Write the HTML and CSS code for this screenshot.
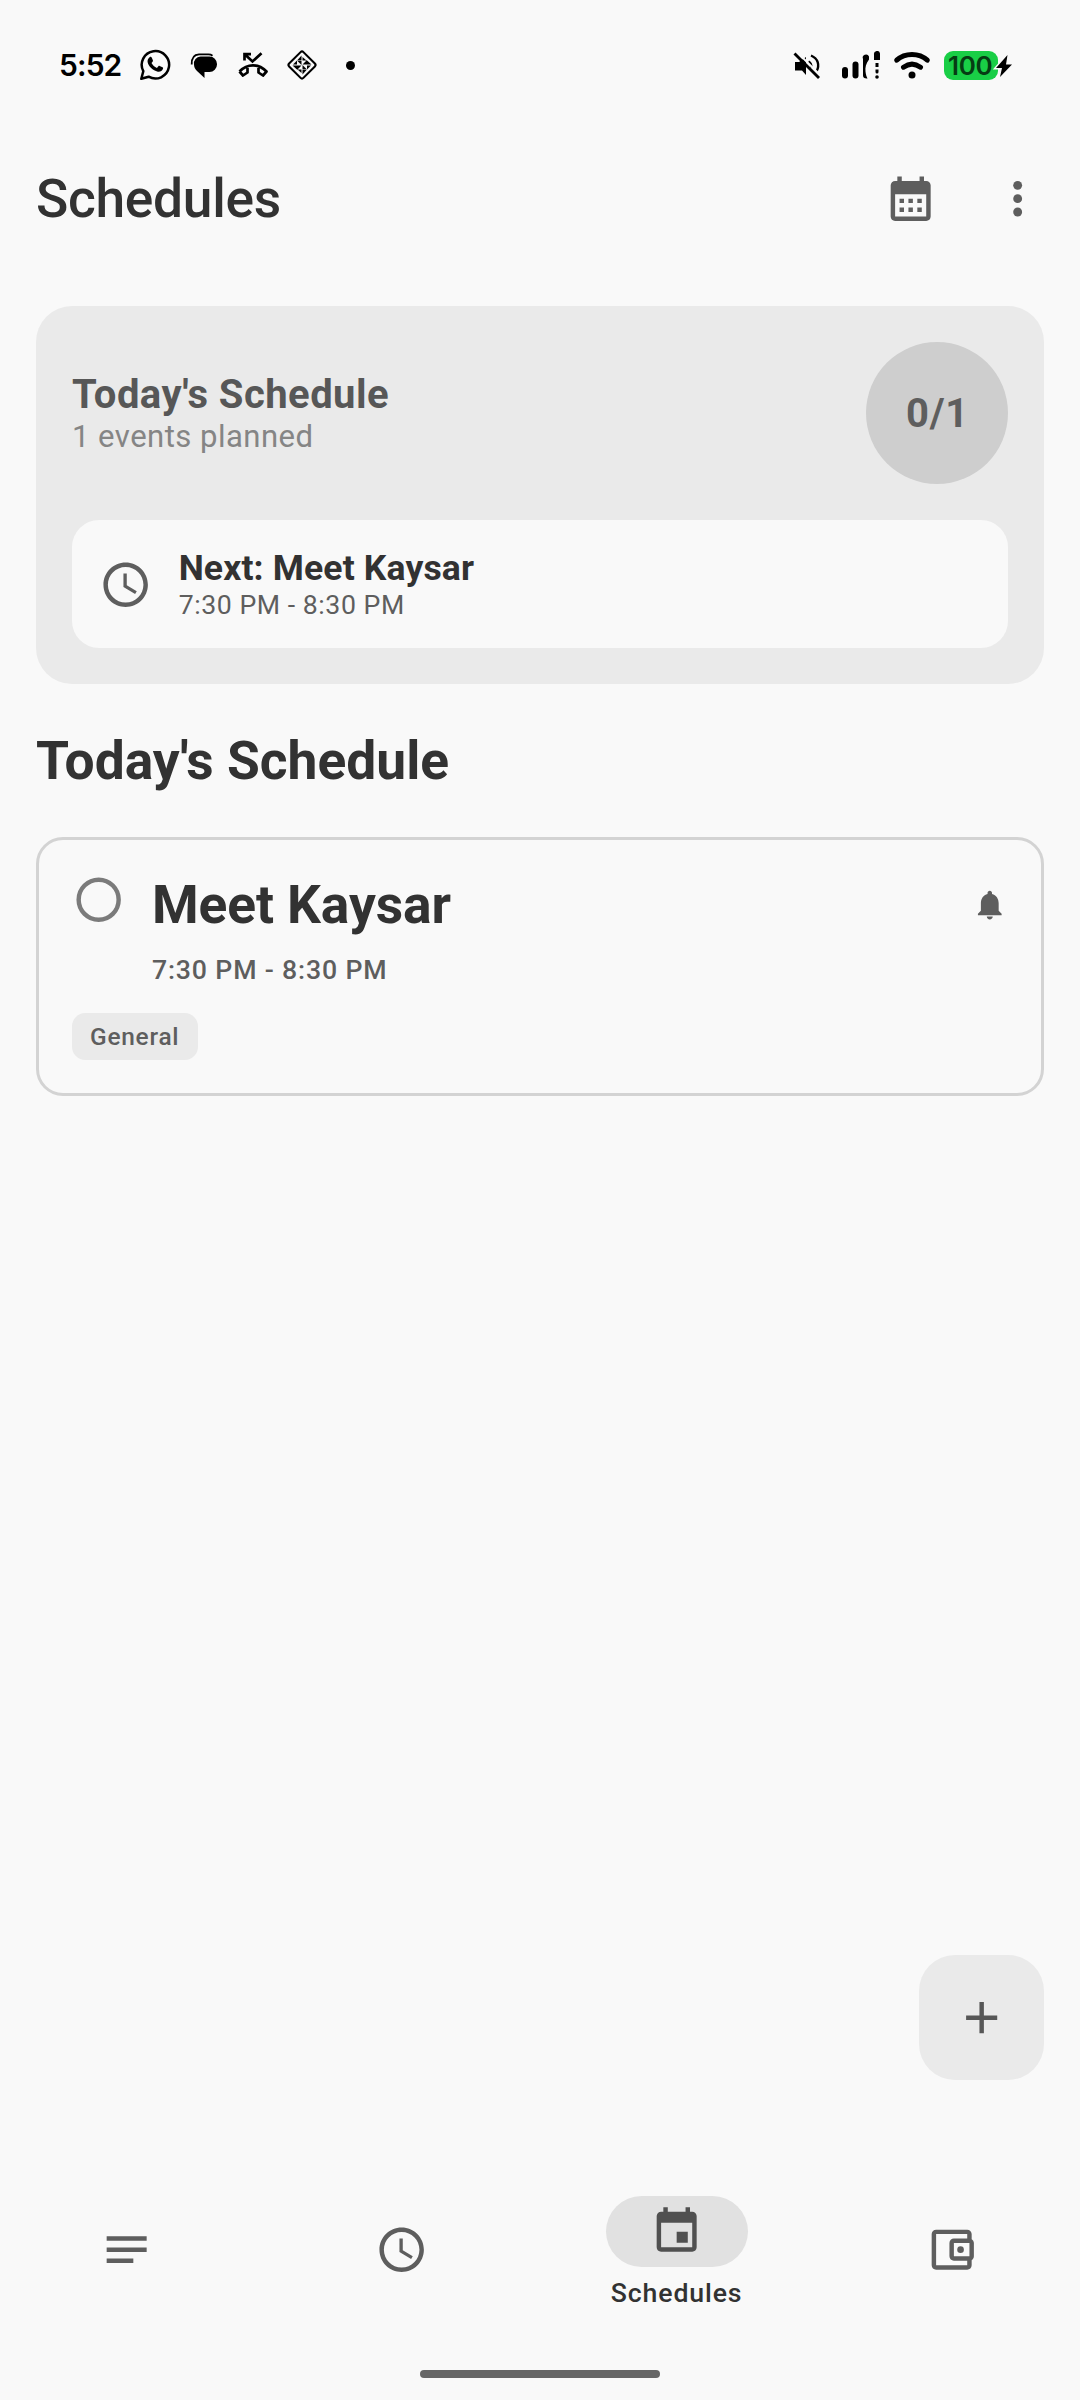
FILE: index.html
```
<!DOCTYPE html>
<html lang="en">
<head>
<meta charset="utf-8">
<title>Schedules</title>
<link rel="stylesheet" href="styles.css">
</head>
<body>
<div class="status">
  <div class="status-left">
    <span class="time">5:52</span>
    <svg class="s-chat" width="32" height="32" viewBox="0 0 32 32"><path d="M2.300 29.800 4.300 22.200A13.700 13.700 0 1 1 9.600 27.700Z" fill="none" stroke="#000" stroke-width="2.500" stroke-linejoin="round"/><path d="M10.600 8.200c.6-.5 1.700-.5 2.100.3l1.200 2.800c.2.500 0 1-.3 1.400l-1.100 1.400c1.200 2.300 3 3.900 5.400 4.900l1.500-1.800c.3-.4.8-.5 1.200-.3l2.900 1.400c.6.300.7.8.5 1.500-.7 2.300-3.100 3.300-5.200 2.900-5-1.100-9.300-5.100-10.200-9.600-.3-1.900.6-3.900 2-4.900z"/></svg>
    <svg class="s-msg" width="28" height="28" viewBox="0 0 28 28"><path d="M10.500 4.500h9a7.500 7.500 0 0 1 7.500 7.500v.5a7.500 7.500 0 0 1-7.500 7.500h-5v6l-7.500-7c-2-1.700-3-4-3-6.500a7 7 0 0 1 6.500-8z"/><path d="M1.700 12.500C1.500 6 4.500 2.600 9 2.400h9.500c1.800 0 3 .5 4 1.300" fill="none" stroke="#000" stroke-width="1.800"/></svg>
    <svg class="s-call" width="32" height="28" viewBox="0 0 32 28"><g fill="none" stroke="#000" stroke-width="2.700"><path d="M7.500 9.500V3.200h6.500M8 3.500l7.500 7L24.500 2.200"/><path d="M2.500 20.500c7.800-8.300 19.200-8.300 27 0l-3.500 4-4.500-3v-4.500M2.500 20.500l3.500 4 4.500-3v-4.500" stroke-linejoin="round"/></g></svg>
    <svg class="s-diamond" width="32" height="32" viewBox="0 0 32 32"><rect x="5.900" y="5.900" width="20.200" height="20.200" rx="2" transform="rotate(45 16 16)" fill="none" stroke="#000" stroke-width="2.100"/><path d="M15.500 6.500v5h-4.500zM16.500 11.500v-3.500l4 3.500zM6.500 16.500h5v4.500zM11 11.500v4h-4zM16.500 25.500v-5H21zM15.500 20.500V24l-4-3.500zM25.500 15.500h-5V11zM21 20.500v-4h4zM11.500 12h4v4zM20.500 11.500v4h-4zM20.500 20h-4v-4zM11.500 20.500v-4h4z"/></svg>
    <span class="dot"></span>
  </div>
  <div class="status-right">
    <svg class="s-mute" width="28" height="28" viewBox="0 0 28 28"><path d="M2 10h4l7-5v18l-4-4.500H2z"/><path d="M15.500 9.500c2 1 3 3 2.800 6M18 3.500c7 3 9 9.500 5.500 16" fill="none" stroke="#000" stroke-width="2.400"/><path d="M3.500-.5 28 24" stroke="#f9f9f9" stroke-width="2"/><path d="M1.500 1.500 26 26" stroke="#000" stroke-width="2.800"/></svg>
    <svg class="s-signal" width="40" height="28" viewBox="0 0 40 28"><rect x="1" y="16" width="6" height="11.500" rx="3"/><rect x="11.500" y="10.500" width="6" height="17" rx="3"/><path d="M22 24.500V8a3 3 0 0 1 6-2.500v3c-3 4-4 8-3.500 12 .3 3 1 5 2 7-3 .3-4.500-1-4.500-3z"/><path d="M33 9V3.500a3 3 0 0 1 6-1V9zM34.500 12h3v4h-3zM34.500 18.500h3V21a1.500 1.500 0 0 1-3 0z"/><circle cx="36" cy="26" r="1.800"/></svg>
    <svg class="s-wifi" width="38" height="28" viewBox="0 0 38 28"><g fill="none" stroke="#000" stroke-linecap="round" stroke-width="5"><path d="M3.700 9.200C12 1.500 26 1.500 34.300 9.200"/><path d="M10.500 16.200c5.500-4 11.500-4 17 0"/></g><circle cx="19" cy="24" r="3.500"/></svg>
    <div class="battery"><span>100</span><svg class="bolt" width="22" height="26" viewBox="0 0 22 26"><path d="M14.500 2 3 15h6l-2 9L19 11.500h-6z" stroke="#f9f9f9" stroke-width="3" paint-order="stroke"/></svg></div>
  </div>
</div>

<header class="header">
  <h1>Schedules</h1>
  <div class="actions">
    <svg class="icon" viewBox="0 0 24 24"><path d="M19 4h-1V2h-2v2H8V2H6v2H5c-1.110 0-1.990.9-1.990 2L3 20c0 1.100.89 2 2 2h14c1.100 0 2-.9 2-2V6c0-1.100-.9-2-2-2zm0 16H5V10h14v10zM9 14H7v-2h2v2zm4 0h-2v-2h2v2zm4 0h-2v-2h2v2zm-8 4H7v-2h2v2zm4 0h-2v-2h2v2zm4 0h-2v-2h2v2z"/></svg>
    <svg class="icon" viewBox="0 0 24 24"><circle cx="12" cy="6" r="2"/><circle cx="12" cy="12" r="2"/><circle cx="12" cy="18" r="2"/></svg>
  </div>
</header>

<main class="main">
  <section class="summary">
    <div class="summary-top">
      <div class="summary-text">
        <h2>Today's Schedule</h2>
        <p>1 events planned</p>
      </div>
      <div class="count">0/1</div>
    </div>
    <div class="next">
      <svg class="icon" viewBox="0 0 24 24"><path d="M11.990 2C6.470 2 2 6.480 2 12s4.470 10 9.990 10C17.520 22 22 17.520 22 12S17.520 2 11.990 2zM12 20c-4.420 0-8-3.580-8-8s3.580-8 8-8 8 3.580 8 8-3.580 8-8 8zm.5-13H11v6l5.250 3.150.75-1.230-4.500-2.670z"/></svg>
      <div class="next-text">
        <h3>Next: Meet Kaysar</h3>
        <p>7:30 PM - 8:30 PM</p>
      </div>
    </div>
  </section>

  <h2 class="section-title">Today's Schedule</h2>

  <article class="event">
    <div class="event-row">
      <svg class="icon radio" viewBox="0 0 24 24"><circle cx="12" cy="12" r="9" fill="none" stroke="#7b7b7b" stroke-width="2"/></svg>
      <div class="event-text">
        <h3>Meet Kaysar</h3>
        <p>7:30 PM - 8:30 PM</p>
      </div>
      <svg class="bell" viewBox="0 0 24 24"><path d="M12 22c1.100 0 2-.9 2-2h-4c0 1.100.89 2 2 2zm6-6v-5c0-3.070-1.640-5.640-4.500-6.320V4c0-.83-.67-1.500-1.500-1.500s-1.500.67-1.500 1.500v.68C7.630 5.360 6 7.920 6 11v5l-2 2v1h16v-1l-2-2z"/></svg>
    </div>
    <span class="chip">General</span>
  </article>
  <button class="fab" aria-label="Add"><svg class="icon" viewBox="0 0 24 24"><path d="M19 13h-6v6h-2v-6H5v-2h6V5h2v6h6v2z"/></svg></button>
</main>

<nav class="nav">
  <a class="item"><svg class="icon" viewBox="0 0 24 24"><path d="M3 18h12v-2H3v2zM3 6v2h18V6H3zm0 7h18v-2H3v2z"/></svg></a>
  <a class="item"><svg class="icon" viewBox="0 0 24 24"><path d="M11.990 2C6.470 2 2 6.480 2 12s4.470 10 9.990 10C17.520 22 22 17.520 22 12S17.520 2 11.990 2zM12 20c-4.420 0-8-3.580-8-8s3.580-8 8-8 8 3.580 8 8-3.580 8-8 8zm.5-13H11v6l5.250 3.150.75-1.230-4.500-2.670z"/></svg></a>
  <a class="item active"><span class="pill"><svg class="icon" viewBox="0 0 24 24"><path d="M17 12h-5v5h5v-5zM16 1v2H8V1H6v2H5c-1.110 0-1.990.9-1.990 2L3 19c0 1.100.89 2 2 2h14c1.100 0 2-.9 2-2V5c0-1.100-.9-2-2-2h-1V1h-2zm3 18H5V8h14v11z"/></svg></span><span class="label">Schedules</span></a>
  <a class="item"><svg class="icon" viewBox="0 0 24 24"><path d="M21 7.280V5c0-1.100-.9-2-2-2H5c-1.110 0-2 .9-2 2v14c0 1.100.89 2 2 2h14c1.100 0 2-.9 2-2v-2.280c.59-.35 1-.98 1-1.720V9c0-.74-.41-1.370-1-1.720zM20 9v6h-7V9h7zM5 19V5h14v2h-6c-1.100 0-2 .9-2 2v6c0 1.100.9 2 2 2h6v2H5z"/><circle cx="16" cy="12" r="1.500"/></svg></a>
</nav>
<div class="home-bar"></div>
</body>
</html>
```
FILE: styles.css
```
* { box-sizing: border-box; margin: 0; padding: 0; }
body {
  width: 1080px; height: 2400px;
  display: flex; flex-direction: column;
  background: #f9f9f9; color: #323232;
  font-family: Roboto, sans-serif;
  overflow: hidden;
}
svg { display: block; flex: none; }
.icon { width: 53.330px; height: 53.330px; fill: #5e5e5e; }

.status { height: 130px; display: flex; justify-content: space-between; padding: 0 66px 0 59px; }
.status-left, .status-right { display: flex; align-items: center; height: 130px; }
.time { width: 80px; font: 600 30px/36px Inter, sans-serif; letter-spacing: -0.9px; color: #000; }
.s-msg { margin: 2px 0 0 19px; }
.s-call { margin-left: 19px; }
.s-diamond { margin-left: 17px; }
.dot { width: 9px; height: 9px; border-radius: 50%; background: #000; margin-left: 28px; }
.s-mute { margin-top: 2px; }
.s-signal { margin-left: 20px; }
.s-wifi { margin-left: 12px; }
.battery {
  position: relative; width: 54px; height: 29px; margin: 0 16px 0 13px;
  border-radius: 9px; background: #19ce46;
}
.battery span { display: block; padding-left: 4px; font: 600 26px/29px Inter, sans-serif; letter-spacing: -0.3px; color: #063c13; }
.bolt { position: absolute; left: 49px; top: 2px; }

.header { height: 176px; display: flex; justify-content: space-between; padding: 37px 36px 0; }
h1 { font-size: 53.330px; line-height: 64px; font-weight: 500; letter-spacing: -0.300px; }
.actions { display: flex; gap: 53.330px; padding-top: 5px; }

.main { flex: 1; display: flex; flex-direction: column; padding: 0 36px; }
.summary { height: 378px; padding: 36px; border-radius: 36px; background: #eaeaea; }
.summary-top { display: flex; justify-content: space-between; height: 142px; }
.summary-text { padding-top: 28.800px; }
.summary h2 { font-size: 40px; line-height: 47px; font-weight: 700; letter-spacing: 0.450px; color: #575757; }
.summary-text p { font-size: 31.100px; line-height: 38px; letter-spacing: 0.450px; color: #858585; }
.count {
  width: 142px; height: 142px; border-radius: 50%; background: #cecece;
  padding: 1px 0 0 1px;
  font-size: 40px; line-height: 142px; font-weight: 700; text-align: center;
  letter-spacing: 0.800px; color: #5e5e5e;
}
.next {
  display: flex; gap: 26.670px; height: 128px; margin-top: 36px; padding: 1px 26.670px 0;
  border-radius: 27px; background: #f9f9f9;
}
.next .icon { align-self: center; }
.next-text { padding-top: 28.400px; }
.next h3 { font-size: 35.560px; line-height: 39px; font-weight: 700; letter-spacing: 0.140px; }
.next p { font-size: 26.670px; line-height: 35px; letter-spacing: 0.550px; color: #5e5e5e; }

.section-title { margin: 45px 0 44px; font-size: 53.330px; line-height: 64px; font-weight: 700; }

.event { height: 259px; padding: 33px; border: 3px solid #d3d3d3; border-radius: 27px; }
.event-row { display: flex; gap: 26.670px; }
.event-text { flex: 1; }
.event h3 { font-size: 53.330px; line-height: 64px; font-weight: 700; letter-spacing: -0.1px; }
.event p { margin-top: 15px; font-size: 26.670px; line-height: 36px; font-weight: 500; letter-spacing: 0.840px; color: #5e5e5e; }
.bell { width: 35.560px; height: 35.560px; margin-top: 14px; fill: #5e5e5e; }
.chip {
  display: block; width: 126px; height: 47px; margin-top: 25px; padding-left: 18px;
  border-radius: 13.300px; background: #eaeaea;
  font-size: 24.440px; line-height: 47px; font-weight: 500; letter-spacing: 0.750px; color: #5e5e5e;
}

.fab {
  display: flex; align-items: center; justify-content: center; align-self: flex-end;
  width: 125px; height: 125px; margin-top: auto; border: 0; border-radius: 36px; background: #eaeaea;
}
.fab .icon { fill: #575757; }

.nav { height: 290px; display: flex; justify-content: space-between; padding: 98px 57.600px 0 56px; }
.item { display: flex; flex-direction: column; align-items: center; justify-content: center; width: 142px; height: 142px; padding-top: 1px; }
.active { justify-content: flex-start; padding-top: 18px; }
.pill {
  display: flex; align-items: center; justify-content: center; flex: none;
  width: 142px; height: 71px; border-radius: 35.500px; background: #e1e1e1;
}
.pill .icon { fill: #505050; }
.label { margin-top: 8px; font-size: 26.670px; line-height: 36px; font-weight: 500; letter-spacing: 0.890px; }

.home-bar { width: 240px; height: 8px; margin: 0 auto 22px; border-radius: 4px; background: #666; }
```
